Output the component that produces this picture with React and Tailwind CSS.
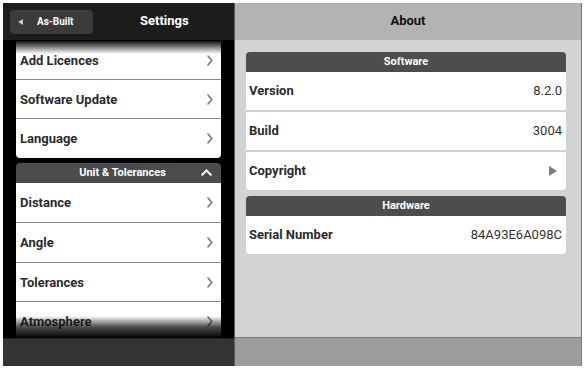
import React from "react";

const Chevron = () => (
  <svg width="6" height="11" viewBox="0 0 6 11" className="shrink-0">
    <path d="M1 1 L4.8 5.5 L1 10" fill="none" stroke="#7a7a7a" strokeWidth="1.6" strokeLinecap="round" />
  </svg>
);

const Row = ({ label, last, h = "h-[39px]" }) => (
  <div className={`${h} flex items-center justify-between pl-[4px] pr-[8px] bg-white ${last ? "" : "border-b border-[#8a8a8a]"}`}>
    <span className="text-[13px] font-bold text-[#2b2b2b] pt-[1px]">{label}</span>
    <Chevron />
  </div>
);

const InfoRow = ({ label, value, arrow, last, h = "h-[39px]" }) => (
  <div className={`${h} flex items-center justify-between pl-[3px] pr-[4px] bg-white ${last ? "" : "border-b-2 border-[#d0d0d0]"}`}>
    <span className="text-[13px] font-bold text-[#2b2b2b]">{label}</span>
    {arrow ? (
      <svg width="8" height="10" viewBox="0 0 8 10" className="mr-[5px]">
        <path d="M0 0 L8 5 L0 10 Z" fill="#7d7d7d" />
      </svg>
    ) : (
      <span className="text-[13px] text-[#333]">{value}</span>
    )}
  </div>
);

export default function App() {
  return (
    <div className="w-[585px] h-[369px] bg-white pt-[3px] pl-[3px] overflow-hidden" style={{ fontFamily: "Roboto, 'Liberation Sans', sans-serif" }}>
      <div className="flex w-[580px] h-[363px]">
        {/* Left panel */}
        <div className="w-[231px] flex flex-col bg-black">
          <div className="h-[37px] bg-[#1c1c1c] flex items-center relative shrink-0">
            <div className="ml-[7px] w-[83px] h-[24px] rounded-[4px] bg-[#3b3b3b] flex items-center">
              <svg width="5" height="6" viewBox="0 0 5 6" className="ml-[8px]">
                <path d="M5 0 L0 3 L5 6 Z" fill="#c8c8c8" />
              </svg>
              <span className="ml-[14px] text-[10px] font-bold text-white">As-Built</span>
            </div>
            <span className="ml-[47px] text-[13px] font-bold text-white pb-[1px]">Settings</span>
          </div>
          <div className="h-[298px] relative overflow-hidden shrink-0">
            <div className="pl-[13px] pr-[13px] mt-[1px]">
              <div className="rounded-b-[4px] overflow-hidden">
                <Row label="Add Licences" />
                <Row label="Software Update" />
                <Row label="Language" last />
              </div>
              <div className="mt-[5px] rounded-t-[4px] overflow-hidden">
                <div className="h-[20px] bg-[#4c4c4c] flex items-center justify-center relative pl-[8px]">
                  <span className="text-[11px] font-bold text-white">Unit &amp; Tolerances</span>
                  <svg width="11" height="7" viewBox="0 0 11 7" className="absolute right-[9px] top-[6px]">
                    <path d="M1.2 5.8 L5.5 1.5 L9.8 5.8" fill="none" stroke="white" strokeWidth="2" strokeLinecap="round" />
                  </svg>
                </div>
                <Row label="Distance" h="h-[40px]" />
                <Row label="Angle" h="h-[40px]" />
                <Row label="Tolerances" />
                <Row label="Atmosphere" />
              </div>
            </div>
            <div className="absolute left-0 right-0 top-0 h-[14px] bg-gradient-to-b from-black to-transparent" />
            <div className="absolute left-0 right-0 bottom-0 h-[22px] bg-gradient-to-t from-black via-black/70 to-transparent" />
          </div>
          <div className="flex-1 bg-[#333333] border-t border-[#222]" />
        </div>
        <div className="w-[1px] bg-[#5a5a5a]" />
        {/* Right panel */}
        <div className="w-[347px] flex flex-col border-r border-[#7a7a7a]">
          <div className="h-[37px] bg-[#b3b3b3] flex items-center justify-center shrink-0">
            <span className="text-[13px] font-bold text-[#111] pb-[1px]">About</span>
          </div>
          <div className="h-[297px] bg-[#d3d3d3] pt-[12px] pl-[11px] pr-[15px] shrink-0">
            <div className="rounded-[4px] overflow-hidden">
              <div className="h-[20px] bg-[#4d4d4d] flex items-center justify-center">
                <span className="text-[11px] font-bold text-white">Software</span>
              </div>
              <InfoRow label="Version" value="8.2.0" h="h-[40px]" />
              <InfoRow label="Build" value="3004" h="h-[40px]" />
              <InfoRow label="Copyright" arrow last h="h-[38px]" />
            </div>
            <div className="mt-[6px] rounded-[4px] overflow-hidden">
              <div className="h-[20px] bg-[#4d4d4d] flex items-center justify-center">
                <span className="text-[11px] font-bold text-white">Hardware</span>
              </div>
              <InfoRow label="Serial Number" value="84A93E6A098C" last h="h-[38px]" />
            </div>
          </div>
          <div className="flex-1 bg-[#9c9c9c] border-t border-[#7a7a7a]" />
        </div>
      </div>
    </div>
  );
}
